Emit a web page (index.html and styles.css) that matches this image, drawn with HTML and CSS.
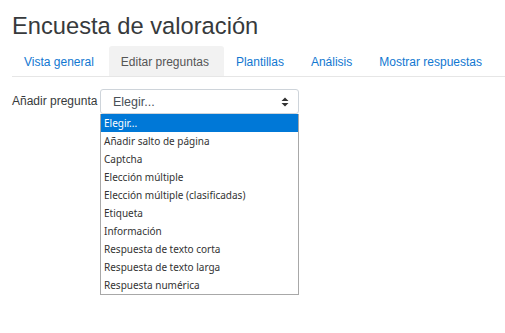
FILE: index.html
```html
<!DOCTYPE html>
<html lang="es">
<head>
<meta charset="utf-8">
<link rel="stylesheet" href="styles.css">
</head>
<body>
<div class="page">
  <h2 class="title">Encuesta de valoración</h2>
  <ul class="tabs">
    <li class="tab"><a href="#">Vista general</a></li>
    <li class="tab active"><a href="#">Editar preguntas</a></li>
    <li class="tab"><a href="#">Plantillas</a></li>
    <li class="tab"><a href="#">Análisis</a></li>
    <li class="tab"><a href="#">Mostrar respuestas</a></li>
  </ul>
  <div class="form-row">
    <label class="label">Añadir pregunta</label>
    <div class="select-wrap">
      <div class="select">
        <span>Elegir...</span>
        <svg class="caret" width="8" height="10" viewBox="0 0 8 10"><path d="M4 0.5 L7.5 4 L0.5 4 Z M0.5 6 L7.5 6 L4 9.5 Z" fill="#333"/></svg>
      </div>
      <ul class="options">
        <li class="opt selected">Elegir...</li>
        <li class="opt">Añadir salto de página</li>
        <li class="opt">Captcha</li>
        <li class="opt">Elección múltiple</li>
        <li class="opt">Elección múltiple (clasificadas)</li>
        <li class="opt">Etiqueta</li>
        <li class="opt">Información</li>
        <li class="opt">Respuesta de texto corta</li>
        <li class="opt">Respuesta de texto larga</li>
        <li class="opt">Respuesta numérica</li>
      </ul>
    </div>
  </div>
</div>
</body>
</html>
```

FILE: styles.css
```css
* { box-sizing: border-box; }
html, body { margin: 0; padding: 0; background: #fff; }
body { font-family: "Liberation Sans", Arial, sans-serif; color: #373a3c; white-space: nowrap; }
.page { padding: 0 0 0 12px; }
.title {
  margin: 0;
  padding-top: 11px;
  font-size: 23.7px;
  font-weight: 400;
  line-height: 30px;
  color: #373a3c;
}
.tabs {
  list-style: none;
  margin: 5px 0 0 0;
  padding: 0;
  display: flex;
  border-bottom: 1px solid #e6e6e6;
}
.tab { flex: none; }
.tab a {
  display: block;
  padding: 0 15px 0 12px;
  height: 30px;
  line-height: 33px;
  font-size: 12px;
  text-decoration: none;
  color: #1177d1;
}
.tab.active a {
  background: #f2f2f2;
  color: #555;
  border-radius: 3px 3px 0 0;
}
.form-row {
  display: flex;
  align-items: flex-start;
  margin-top: 12px;
}
.label {
  flex: none;
  font-size: 12px;
  color: #373a3c;
  line-height: 24px;
  width: 88px;
}
.select-wrap { flex: none; width: 199px; }
.select {
  height: 25px;
  border: 1px solid #ced4da;
  border-radius: 3px;
  display: flex;
  align-items: center;
  justify-content: space-between;
  padding: 0 9px 0 12px;
  font-size: 12.5px;
  color: #495057;
}
.options {
  list-style: none;
  margin: 0;
  padding: 0;
  border: 1px solid #a8a8a8;
  border-top: none;
  font-family: "Noto Sans", "DejaVu Sans", sans-serif;
  font-size: 10px;
  color: #333;
}
.opt {
  height: 18px;
  line-height: 18px;
  padding-left: 3px;
}
.opt.selected { background: #0078d7; color: #fff; }
```
